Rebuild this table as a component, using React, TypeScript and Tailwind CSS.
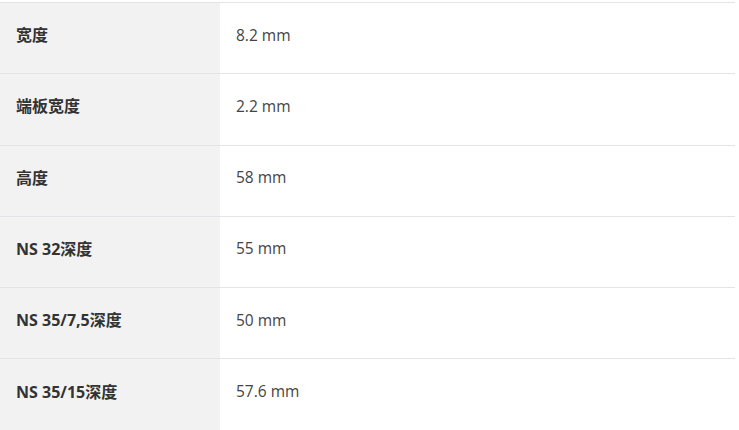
import React from "react";

const rows: [string, string][] = [
  ["宽度", "8.2 mm"],
  ["端板宽度", "2.2 mm"],
  ["高度", "58 mm"],
  ["NS 32深度", "55 mm"],
  ["NS 35/7,5深度", "50 mm"],
  ["NS 35/15深度", "57.6 mm"],
];

export default function App() {
  return (
    <div
      className="w-[739px] h-[430px] overflow-hidden bg-white pt-[2px]"
      style={{ fontFamily: '"Open Sans", "Noto Sans CJK SC", Arial, sans-serif' }}
    >
      <div className="w-[735px]">
        {rows.map(([k, v]) => (
          <div key={k} className="flex h-[71.3px] border-t border-[#e3e3e8] box-border">
            <div className="w-[220px] shrink-0 bg-[#f2f2f2] flex items-center pl-[16px] pb-[6px] text-[16px] font-bold text-[#333333]">
              {k}
            </div>
            <div className="flex-1 flex items-center pl-[16px] pb-[6px] text-[15.5px] text-[#444444]">
              {v}
            </div>
          </div>
        ))}
      </div>
    </div>
  );
}
